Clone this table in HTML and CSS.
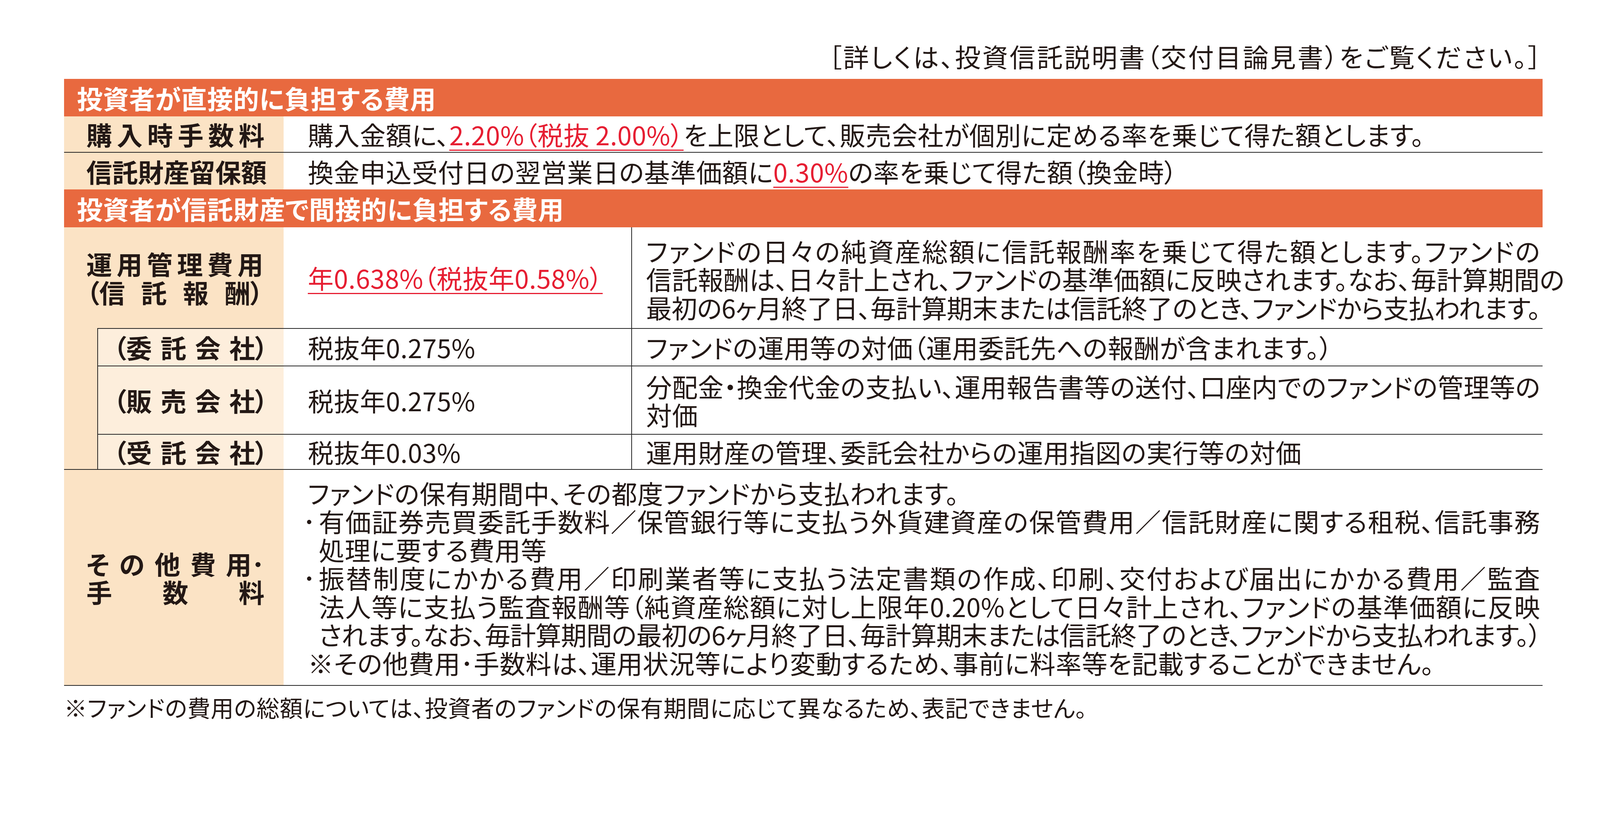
FILE: index.html
```html
<!DOCTYPE html>
<html lang="ja">
<head>
<meta charset="utf-8">
<title>費用</title>
<link rel="stylesheet" href="styles.css">
</head>
<body>
<div class="page">
  <p class="note">［詳しくは、投資信託説明書（交付目論見書）をご覧ください。］</p>
  <div class="fee-table">
    <div class="section-head">投資者が直接的に負担する費用</div>
    <div class="row row-first">
      <div class="label"><div class="dist"><span>購</span><span>入</span><span>時</span><span>手</span><span>数</span><span>料</span></div></div>
      <div class="value"><p>購入金額に、<span class="red">2.20%（税抜 2.00%）</span>を上限として、販売会社が個別に定める率を乗じて得た額とします。</p></div>
    </div>
    <div class="row row-second">
      <div class="label"><div class="dist"><span>信</span><span>託</span><span>財</span><span>産</span><span>留</span><span>保</span><span>額</span></div></div>
      <div class="value"><p>換金申込受付日の翌営業日の基準価額に<span class="red">0.30%</span>の率を乗じて得た額（換金時）</p></div>
    </div>
    <div class="section-head">投資者が信託財産で間接的に負担する費用</div>
    <div class="indirect">
      <div class="label main-label">
        <div class="dist"><span>運</span><span>用</span><span>管</span><span>理</span><span>費</span><span>用</span></div>
        <div class="dist"><span>（信</span><span>託</span><span>報</span><span>酬）</span></div>
      </div>
      <div class="cell main-value"><p><span class="red">年0.638%（税抜年0.58%）</span></p></div>
      <div class="cell desc first-desc">
        <p class="lines">
          <span class="jl">ファンドの日々の純資産総額に信託報酬率を乗じて得た額とします。ファンドの</span>
          <span class="jl t0">信託報酬は、日々計上され、ファンドの基準価額に反映されます。なお、毎計算期間の</span>
          <span class="jl t1">最初の6ヶ月終了日、毎計算期末または信託終了のとき、ファンドから支払われます。</span>
        </p>
      </div>
      <div class="side"></div>

      <div class="sub-label"><div class="dist"><span>（委</span><span>託</span><span>会</span><span>社）</span></div></div>
      <div class="cell sub-value"><p>税抜年0.275%</p></div>
      <div class="cell desc sub-desc"><p>ファンドの運用等の対価（運用委託先への報酬が含まれます。）</p></div>

      <div class="sub-label"><div class="dist"><span>（販</span><span>売</span><span>会</span><span>社）</span></div></div>
      <div class="cell sub-value"><p>税抜年0.275%</p></div>
      <div class="cell desc sub-desc">
        <p class="lines">
          <span class="jl t0">分配金・換金代金の支払い、運用報告書等の送付、口座内でのファンドの管理等の</span>
          <span class="ln">対価</span>
        </p>
      </div>

      <div class="sub-label"><div class="dist"><span>（受</span><span>託</span><span>会</span><span>社）</span></div></div>
      <div class="cell sub-value"><p>税抜年0.03%</p></div>
      <div class="cell desc sub-desc"><p>運用財産の管理、委託会社からの運用指図の実行等の対価</p></div>
    </div>
    <div class="row row-other">
      <div class="label">
        <div class="dist"><span>そ</span><span>の</span><span>他</span><span>費</span><span>用･</span></div>
        <div class="dist"><span>手</span><span>数</span><span>料</span></div>
      </div>
      <div class="value other-value">
        <p>ファンドの保有期間中、その都度ファンドから支払われます。</p>
        <div class="bullet">
          <span class="dot">･</span>
          <p class="lines">
            <span class="jl">有価証券売買委託手数料／保管銀行等に支払う外貨建資産の保管費用／信託財産に関する租税、信託事務</span>
            <span class="ln">処理に要する費用等</span>
          </p>
        </div>
        <div class="bullet">
          <span class="dot">･</span>
          <p class="lines">
            <span class="jl">振替制度にかかる費用／印刷業者等に支払う法定書類の作成、印刷、交付および届出にかかる費用／監査</span>
            <span class="jl">法人等に支払う監査報酬等（純資産総額に対し上限年0.20%として日々計上され、ファンドの基準価額に反映</span>
            <span class="jl t1">されます。なお、毎計算期間の最初の6ヶ月終了日、毎計算期末または信託終了のとき、ファンドから支払われます。）</span>
          </p>
        </div>
        <p>※その他費用･手数料は、運用状況等により変動するため、事前に料率等を記載することができません。</p>
      </div>
    </div>
  </div>
  <p class="footnote">※ファンドの費用の総額については、投資者のファンドの保有期間に応じて異なるため、表記できません。</p>
</div>
</body>
</html>
```

FILE: styles.css
```css
* {
  box-sizing: border-box;
  margin: 0;
  padding: 0;
}

html,
body {
  background: #ffffff;
}

body {
  font-family: "Noto Sans CJK JP", "Noto Sans", sans-serif;
  font-size: 66px;
  line-height: 72.5px;
  letter-spacing: 0.6px;
  color: #231815;
  font-feature-settings: "palt";
  overflow: hidden;
}

.page {
  padding: 107px 0 0 164px;
}

.note {
  width: 3785px;
  text-align: right;
  letter-spacing: 4px;
  margin-bottom: 22px;
  white-space: nowrap;
}

.fee-table {
  width: 3785px;
}

.section-head {
  background: #e8693f;
  color: #ffffff;
  font-weight: 700;
  letter-spacing: 0.7px;
  padding: 12px 33px;
}

.row {
  display: grid;
  grid-template-columns: 562px minmax(0, 1fr);
}

.row-first {
  border-bottom: 2px solid #262626;
}

.row-first .label,
.row-first .value {
  padding-top: 9px;
  padding-bottom: 9px;
}

.row-second .label,
.row-second .value {
  padding-top: 11px;
  padding-bottom: 11px;
}

.row-other {
  border-top: 2px solid #262626;
  border-bottom: 2px solid #262626;
}

.label {
  background: #fbe3c5;
  font-weight: 700;
  letter-spacing: 0;
  padding: 0 49px 0 57px;
  display: flex;
  flex-direction: column;
  justify-content: center;
}

.dist {
  display: flex;
  justify-content: space-between;
  white-space: nowrap;
}

.value {
  padding: 0 6px 0 62px;
  white-space: nowrap;
  display: flex;
  flex-direction: column;
  justify-content: center;
}

.red {
  color: #e61e32;
  text-decoration: underline;
  text-decoration-color: #e61e32;
  text-decoration-thickness: 2.5px;
  text-underline-offset: 11px;
}

.indirect {
  display: grid;
  grid-template-columns: 85px 477px 890px minmax(0, 1fr);
  grid-template-rows: 258px 96px 175px 90px;
}

.main-label {
  grid-column: 1 / 3;
  grid-row: 1;
  padding: 0 52px 0 57px;
}

.side {
  grid-column: 1;
  grid-row: 2 / 5;
  background: #fbe3c5;
}

.cell {
  display: flex;
  flex-direction: column;
  justify-content: center;
  white-space: nowrap;
  min-width: 0;
}

.main-value,
.sub-value {
  padding-left: 62px;
}

.desc {
  border-left: 2px solid #262626;
  padding-left: 36px;
  padding-right: 6px;
}

.first-desc {
  padding-top: 6px;
}

.sub-label {
  background: #fdeedc;
  border-left: 2px solid #262626;
  border-top: 2px solid #262626;
  font-weight: 700;
  letter-spacing: 0;
  padding: 0 40px 0 39px;
  display: flex;
  flex-direction: column;
  justify-content: center;
}

.sub-value,
.sub-desc {
  border-top: 2px solid #262626;
}

.lines .jl,
.lines .ln {
  display: block;
}

.jl {
  text-align: justify;
  text-align-last: justify;
}

.t0 {
  letter-spacing: 0;
}

.t1 {
  letter-spacing: -1px;
}

.other-value {
  padding-top: 22px;
  padding-bottom: 22px;
}

.bullet {
  display: flex;
}

.dot {
  flex: 0 0 28px;
  text-indent: -13px;
}

.bullet .lines {
  flex: 1 1 auto;
  min-width: 0;
}

.footnote {
  margin-top: 22px;
  font-size: 59px;
  line-height: 66px;
  white-space: nowrap;
}
```
